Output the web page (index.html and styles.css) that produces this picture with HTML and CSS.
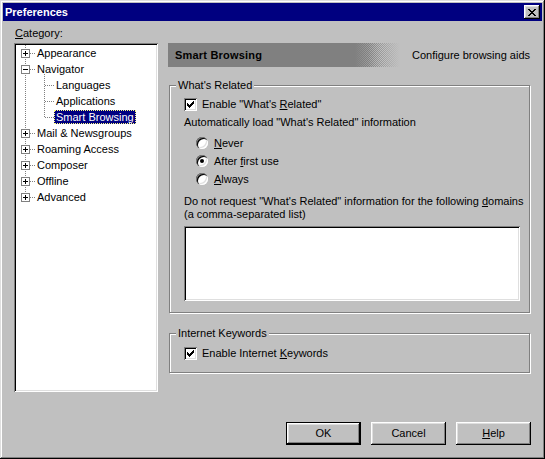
FILE: index.html
```html
<!DOCTYPE html>
<html>
<head>
<meta charset="utf-8">
<link rel="stylesheet" href="styles.css">
</head>
<body>
<div class="window">
  <div class="titlebar">
    <span class="title">Preferences</span>
    <button class="close" type="button" aria-label="Close">
      <svg width="8" height="7" viewBox="0 0 8 7" shape-rendering="crispEdges"><path fill="#000" d="M0 0h2v1H0zM6 0h2v1H6zM1 1h2v1H1zM5 1h2v1H5zM2 2h4v1H2zM3 3h2v1H3zM2 4h4v1H2zM1 5h2v1H1zM5 5h2v1H5zM0 6h2v1H0zM6 6h2v1H6z"/></svg>
    </button>
  </div>

  <div class="main">
    <div class="left">
      <div class="cat-label"><u>C</u>ategory:</div>
      <div class="tree">
        <svg class="tree-lines" width="140" height="345" shape-rendering="crispEdges">
          <g stroke="#808080" stroke-width="1" fill="none" stroke-dasharray="1 1">
            <path d="M9.5 0V153"/>
            <path d="M14 8.5H19M14 24.5H19M14 88.5H19M14 104.5H19M14 120.5H19M14 136.5H19M14 152.5H19"/>
            <path d="M28.5 29V73"/>
            <path d="M29 40.5H38M29 56.5H38M29 72.5H38"/>
          </g>
        </svg>
        <ul class="tree-list">
          <li class="row"><span class="exp plus"></span><span class="lbl">Appearance</span></li>
          <li class="row"><span class="exp minus"></span><span class="lbl">Navigator</span></li>
          <li class="row child"><span class="lbl">Languages</span></li>
          <li class="row child"><span class="lbl">Applications</span></li>
          <li class="row child"><span class="lbl selected">Smart Browsing</span></li>
          <li class="row"><span class="exp plus"></span><span class="lbl">Mail &amp; Newsgroups</span></li>
          <li class="row"><span class="exp plus"></span><span class="lbl">Roaming Access</span></li>
          <li class="row"><span class="exp plus"></span><span class="lbl">Composer</span></li>
          <li class="row"><span class="exp plus"></span><span class="lbl">Offline</span></li>
          <li class="row"><span class="exp plus"></span><span class="lbl">Advanced</span></li>
        </ul>
      </div>
    </div>

    <div class="right">
      <div class="header">
        <div class="header-bar">
          <span class="header-title">Smart Browsing</span>
          <span class="dither"></span>
        </div>
        <span class="header-desc">Configure browsing aids</span>
      </div>

      <fieldset class="group g1">
        <legend>What's Related</legend>
        <div class="group-body body1">
          <div class="chk-row"><span class="checkbox checked"><svg width="7" height="7" viewBox="0 0 7 7" shape-rendering="crispEdges"><path fill="#000" d="M0 2h1v3H0zM1 3h1v3H1zM2 4h1v3H2zM3 3h1v3H3zM4 2h1v3H4zM5 1h1v3H5zM6 0h1v3H6z"/></svg></span><span>Enable &quot;What's <u>R</u>elated&quot;</span></div>
          <div class="para p-auto">Automatically load &quot;What's Related&quot; information</div>
          <div class="radios">
            <div class="radio-row"><span class="radio"></span><span><u>N</u>ever</span></div>
            <div class="radio-row"><span class="radio on"></span><span>After <u>f</u>irst use</span></div>
            <div class="radio-row"><span class="radio"></span><span><u>A</u>lways</span></div>
          </div>
          <div class="para p-domains">Do not request &quot;What's Related&quot; information for the following <u>d</u>omains<br>(a comma-separated list)</div>
          <textarea class="field"></textarea>
        </div>
      </fieldset>

      <fieldset class="group g2">
        <legend>Internet Keywords</legend>
        <div class="group-body body2">
          <div class="chk-row"><span class="checkbox checked"><svg width="7" height="7" viewBox="0 0 7 7" shape-rendering="crispEdges"><path fill="#000" d="M0 2h1v3H0zM1 3h1v3H1zM2 4h1v3H2zM3 3h1v3H3zM4 2h1v3H4zM5 1h1v3H5zM6 0h1v3H6z"/></svg></span><span>Enable Internet <u>K</u>eywords</span></div>
        </div>
      </fieldset>
    </div>
  </div>

  <div class="footer">
    <button class="btn default" type="button">OK</button>
    <button class="btn" type="button">Cancel</button>
    <button class="btn" type="button"><u>H</u>elp</button>
  </div>
</div>
</body>
</html>
```

FILE: styles.css
```css
* { box-sizing: border-box; }

html, body {
  margin: 0;
  padding: 0;
  background: #c0c0c0;
}

body {
  font-family: "Liberation Sans", Arial, sans-serif;
  font-size: 11px;
  line-height: 13px;
  color: #000;
}

u { text-decoration: underline; text-underline-offset: 1px; }

.window {
  width: 545px;
  height: 459px;
  padding: 3px;
  background: #c0c0c0;
  display: flex;
  flex-direction: column;
  box-shadow: inset -1px -1px #000, inset 1px 1px #dfdfdf, inset -2px -2px #808080, inset 2px 2px #fff;
}

/* Title bar */
.titlebar {
  height: 18px;
  background: #000080;
  color: #fff;
  display: flex;
  align-items: center;
  justify-content: space-between;
  padding: 0 2px;
}

.title {
  font-weight: bold;
  font-size: 11px;
}

.close {
  width: 16px;
  height: 14px;
  padding: 0;
  margin: 0;
  border: 0;
  background: #c0c0c0;
  display: flex;
  align-items: center;
  justify-content: center;
  box-shadow: inset -1px -1px #000, inset 1px 1px #fff, inset -2px -2px #808080, inset 2px 2px #dfdfdf;
}

.close svg { display: block; margin-left: -1px; }

/* Main area */
.main {
  display: flex;
  gap: 10px;
  padding: 0 11px;
  margin-top: 6px;
}

.left {
  width: 144px;
  flex: none;
}

.cat-label {
  height: 16px;
  padding-left: 1px;
}

.tree {
  position: relative;
  height: 349px;
  background: #fff;
  padding: 2px;
  box-shadow: inset 1px 1px #808080, inset -1px -1px #fff, inset 2px 2px #000, inset -2px -2px #dfdfdf;
}

.tree-lines {
  position: absolute;
  left: 2px;
  top: 2px;
}

.tree-list {
  position: relative;
  list-style: none;
  margin: 0;
  padding: 0;
}

.row {
  height: 16px;
  display: flex;
  align-items: center;
  white-space: nowrap;
}

.exp {
  width: 9px;
  height: 9px;
  margin-left: 5px;
  border: 1px solid #808080;
  background-color: #fff;
  flex: none;
}

.exp.plus {
  background-image: linear-gradient(#000, #000), linear-gradient(#000, #000);
  background-size: 5px 1px, 1px 5px;
  background-position: center, center;
  background-repeat: no-repeat;
}

.exp.minus {
  background-image: linear-gradient(#000, #000);
  background-size: 5px 1px;
  background-position: center;
  background-repeat: no-repeat;
}

.lbl {
  margin-left: 5px;
  padding: 0 1px;
  border: 1px dotted transparent;
  line-height: 12px;
}

.child .lbl { margin-left: 38px; }

.lbl.selected {
  background: #000080;
  color: #fff;
  border-color: #ffff80;
}

/* Right column */
.right {
  width: 363px;
  flex: none;
  margin-top: 16px;
}

.header {
  height: 24px;
  display: flex;
  align-items: stretch;
}

.header-bar {
  width: 232px;
  display: flex;
}

.header-title {
  flex: 1;
  background: #808080;
  font-weight: bold;
  display: flex;
  align-items: center;
  padding-left: 7px;
  letter-spacing: 0.2px;
}

.dither {
  width: 45px;
  background:
    linear-gradient(to right, #808080, rgba(128,128,128,0) 60%),
    repeating-conic-gradient(#808080 0 25%, #c0c0c0 0 50%) 0 0 / 2px 2px;
  -webkit-mask-image: linear-gradient(to right, #000 0%, #000 30%, rgba(0,0,0,0) 100%);
  mask-image: linear-gradient(to right, #000 0%, #000 30%, rgba(0,0,0,0) 100%);
}

.header-desc {
  margin-left: 12px;
  display: flex;
  align-items: center;
}

/* Group boxes */
.group {
  margin: 0 0 0 1px;
  padding: 0;
  width: 361px;
  min-width: 0;
  border: 1px solid #808080;
  box-shadow: inset 1px 1px #fff, 1px 1px #fff;
}

.group legend {
  margin-left: 6px;
  padding: 0 2px;
  line-height: 13px;
  background: #c0c0c0;
}

.g1 { margin-top: 12px; }
.g2 { margin-top: 14px; }

.group-body {
  padding-left: 14px;
  padding-right: 9px;
}

.body1 { padding-top: 6px; padding-bottom: 11px; }
.body2 { padding-top: 7px; padding-bottom: 12px; }

.chk-row {
  height: 13px;
  display: flex;
  align-items: center;
  gap: 5px;
  white-space: nowrap;
}

.checkbox {
  width: 13px;
  height: 13px;
  flex: none;
  background: #fff;
  display: flex;
  align-items: center;
  justify-content: center;
  box-shadow: inset 1px 1px #808080, inset -1px -1px #fff, inset 2px 2px #000, inset -2px -2px #dfdfdf;
}

.checkbox svg { display: block; }

.para { white-space: nowrap; }
.p-auto { margin-top: 5px; }
.p-domains { margin-top: 7px; }

.radios { margin-top: 5px; }

.radio-row {
  height: 18px;
  display: flex;
  align-items: center;
  gap: 6px;
  padding-left: 12px;
}

.radio {
  width: 12px;
  height: 12px;
  flex: none;
  border-radius: 50%;
  background: #fff;
  display: flex;
  align-items: center;
  justify-content: center;
  box-shadow: inset 1px 1px #808080, inset 2px 2px #000, inset -1px -1px #fff, inset -2px -2px #dfdfdf;
}

.radio.on::after {
  content: "";
  width: 4px;
  height: 4px;
  border-radius: 50%;
  background: #000;
}

.field {
  display: block;
  margin-top: 5px;
  width: 336px;
  height: 75px;
  border: 0;
  padding: 0;
  resize: none;
  background: #fff;
  outline: none;
  font: inherit;
  box-shadow: inset 1px 1px #808080, inset -1px -1px #fff, inset 2px 2px #000, inset -2px -2px #dfdfdf;
}

/* Footer buttons */
.footer {
  margin-top: auto;
  display: flex;
  justify-content: flex-end;
  gap: 10px;
  padding: 0 11px 11px 0;
}

.btn {
  width: 75px;
  height: 23px;
  padding: 0;
  margin: 0;
  border: 0;
  background: #c0c0c0;
  font: inherit;
  color: #000;
  box-shadow: inset -1px -1px #000, inset 1px 1px #fff, inset -2px -2px #808080, inset 2px 2px #dfdfdf;
}

.btn.default {
  border: 1px solid #000;
  box-shadow: inset -1px -1px #000, inset 1px 1px #fff, inset -2px -2px #808080, inset 2px 2px #dfdfdf;
}
```
